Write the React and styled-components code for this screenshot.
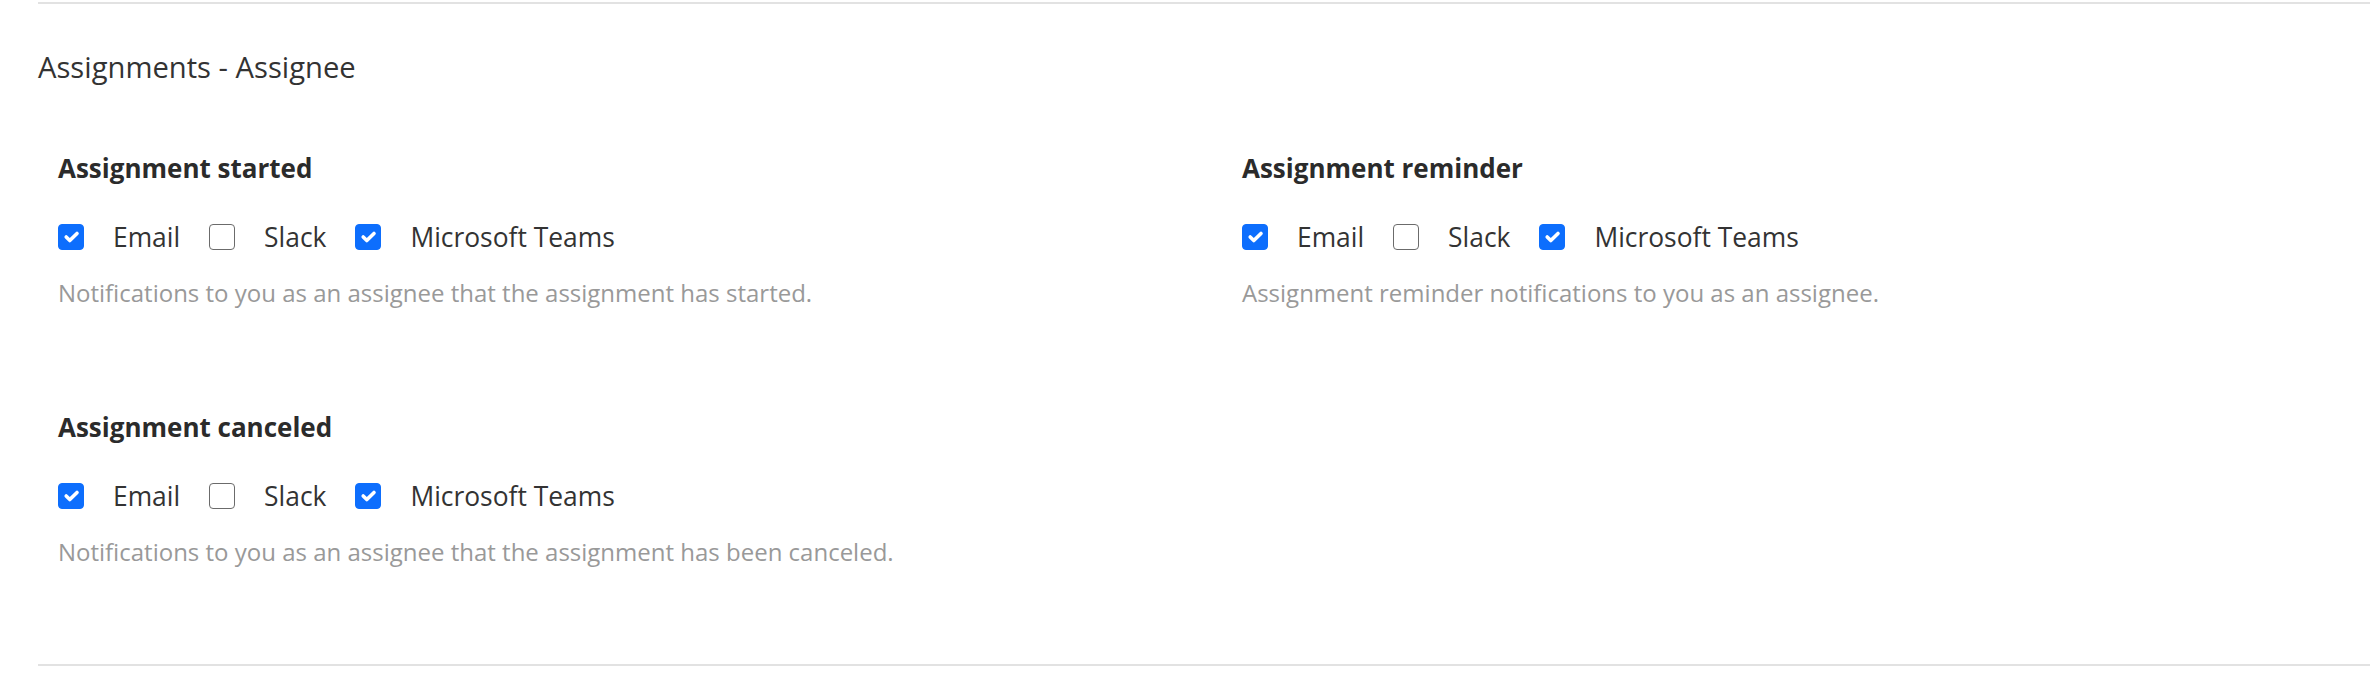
import React, { useState } from 'react';
import styled, { createGlobalStyle } from 'styled-components';

const GlobalStyle = createGlobalStyle`
  body {
    margin: 0;
    background: #ffffff;
    font-family: "Open Sans", "Liberation Sans", sans-serif;
    overflow: hidden;
  }
`;

const channels = ['Email', 'Slack', 'Microsoft Teams'];

const initialSettings = [
  {
    id: 'started',
    title: 'Assignment started',
    description: 'Notifications to you as an assignee that the assignment has started.',
    checked: { Email: true, Slack: false, 'Microsoft Teams': true },
  },
  {
    id: 'reminder',
    title: 'Assignment reminder',
    description: 'Assignment reminder notifications to you as an assignee.',
    checked: { Email: true, Slack: false, 'Microsoft Teams': true },
  },
  {
    id: 'canceled',
    title: 'Assignment canceled',
    description: 'Notifications to you as an assignee that the assignment has been canceled.',
    checked: { Email: true, Slack: false, 'Microsoft Teams': true },
  },
];

function CheckMark() {
  return (
    <svg viewBox="0 0 20 20" width="100%" height="100%">
      <path
        d="M6 10l3 3l6-6"
        fill="none"
        stroke="#ffffff"
        strokeWidth="3"
        strokeLinecap="round"
        strokeLinejoin="round"
      />
    </svg>
  );
}

function App() {
  const [settings, setSettings] = useState(initialSettings);

  const toggle = (id, channel) => {
    setSettings(prev =>
      prev.map(s =>
        s.id === id ? { ...s, checked: { ...s.checked, [channel]: !s.checked[channel] } } : s
      )
    );
  };

  return (
    <>
      <GlobalStyle />
      <Section>
        <SectionTitle>Assignments - Assignee</SectionTitle>
        <Grid>
          {settings.map(setting => (
            <Item key={setting.id}>
              <ItemTitle>{setting.title}</ItemTitle>
              <Options>
                {channels.map(channel => (
                  <Option key={channel} onClick={() => toggle(setting.id, channel)}>
                    <Box $checked={setting.checked[channel]}>
                      {setting.checked[channel] && <CheckMark />}
                    </Box>
                    <Label>{channel}</Label>
                  </Option>
                ))}
              </Options>
              <Description>{setting.description}</Description>
            </Item>
          ))}
        </Grid>
      </Section>
    </>
  );
}

const Section = styled.section`
  margin: 2px 0 0 38px;
  border-top: 2px solid #e2e2e2;
  border-bottom: 2px solid #e2e2e2;
  padding-bottom: 96px;
`;

const SectionTitle = styled.h2`
  margin: 42.5px 0 0;
  font-size: 29.2px;
  font-weight: 400;
  line-height: normal;
  color: #333333;
`;

const Grid = styled.div`
  display: grid;
  grid-template-columns: 1184px 1184px;
  row-gap: 100px;
  margin-top: 63px;
  padding-left: 20px;
`;

const Item = styled.div`
  display: flex;
  flex-direction: column;
  align-items: flex-start;
`;

const ItemTitle = styled.h3`
  margin: 0 0 33.5px;
  font-size: 26px;
  font-weight: 700;
  line-height: normal;
  color: #2b2b2b;
`;

const Options = styled.div`
  display: flex;
  align-items: center;
  gap: 29px;
`;

const Option = styled.label`
  display: flex;
  align-items: center;
  gap: 29px;
  cursor: pointer;
`;

const Box = styled.span`
  box-sizing: border-box;
  width: 26px;
  height: 26px;
  border-radius: 4px;
  display: flex;
  background: ${p => (p.$checked ? '#0d6efd' : '#ffffff')};
  border: ${p => (p.$checked ? '1.6px solid #0d6efd' : '1.6px solid #6b6b6b')};
`;

const Label = styled.span`
  font-size: 26.4px;
  line-height: normal;
  color: #333333;
`;

const Description = styled.p`
  margin: 20.7px 0 0;
  font-size: 24px;
  line-height: normal;
  color: #999999;
`;

export default App;
